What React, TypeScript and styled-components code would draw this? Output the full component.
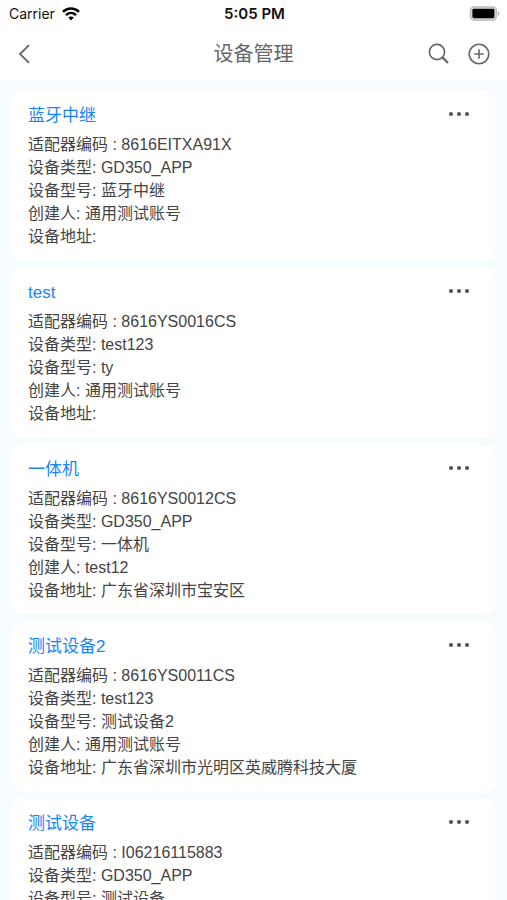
import React from "react";
import styled, { createGlobalStyle } from "styled-components";

const GlobalStyle = createGlobalStyle`
  *, *::before, *::after { box-sizing: border-box; }
  body {
    margin: 0;
    background: #f7fcff;
    color: #444;
    font-family: "Liberation Sans", "Noto Sans CJK SC", sans-serif;
  }
`;

const Screen = styled.div`
  display: flex;
  flex-direction: column;
  height: 100vh;
`;

const StatusBar = styled.div`
  display: grid;
  grid-template-columns: 1fr auto 1fr;
  align-items: center;
  height: 27px;
  padding: 0 7px 0 9px;
  background: #fff;
  color: #111;
  font-family: Inter, sans-serif;
  font-size: 14px;
  line-height: 20px;
`;

const Carrier = styled.span`
  display: flex;
  align-items: center;
  gap: 7px;
`;

const Clock = styled.time`
  font-size: 15px;
  font-weight: 600;
`;

const Battery = styled.svg`
  justify-self: end;
`;

const NavBar = styled.header`
  display: grid;
  grid-template-columns: 1fr auto 1fr;
  align-items: center;
  height: 53px;
  padding: 0 12px;
  background: #fff;
  color: #666;
`;

const PageTitle = styled.h1`
  margin: 0;
  font-size: 20px;
  font-weight: 400;
  line-height: 28px;
`;

const Actions = styled.div`
  display: flex;
  justify-content: flex-end;
  gap: 8px;
`;

const IconButton = styled.button`
  display: flex;
  align-items: center;
  justify-content: center;
  width: 32px;
  height: 32px;
  padding: 0;
  border: 0;
  background: none;
  color: inherit;
  cursor: pointer;
`;

const BackButton = styled(IconButton)`
  width: 24px;
`;

const DeviceList = styled.main`
  display: flex;
  flex: 1;
  flex-direction: column;
  gap: 8px;
  min-height: 0;
  padding: 11px 12px;
  overflow-y: auto;
  scrollbar-width: none;
`;

const Card = styled.article`
  flex: none;
  padding: 12px 16px;
  border-radius: 10px;
  background: #fff;
`;

const CardHeader = styled.div`
  display: flex;
  align-items: flex-start;
  justify-content: space-between;
  margin-bottom: 4px;
`;

const DeviceName = styled.h2`
  margin: 0;
  color: #1785f5;
  font-size: 17px;
  font-weight: 400;
  line-height: 26px;
`;

const MoreButton = styled(IconButton)`
  width: 40px;
  height: 22px;
`;

const Field = styled.p`
  margin: 0;
  font-size: 16px;
  line-height: 23px;
`;

interface Device {
  name: string;
  code: string;
  type: string;
  model: string;
  creator: string;
  address: string;
}

const devices: Device[] = [
  { name: "蓝牙中继", code: "8616EITXA91X", type: "GD350_APP", model: "蓝牙中继", creator: "通用测试账号", address: "" },
  { name: "test", code: "8616YS0016CS", type: "test123", model: "ty", creator: "通用测试账号", address: "" },
  { name: "一体机", code: "8616YS0012CS", type: "GD350_APP", model: "一体机", creator: "test12", address: "广东省深圳市宝安区" },
  { name: "测试设备2", code: "8616YS0011CS", type: "test123", model: "测试设备2", creator: "通用测试账号", address: "广东省深圳市光明区英威腾科技大厦" },
  { name: "测试设备", code: "I06216115883", type: "GD350_APP", model: "测试设备", creator: "通用测试账号", address: "" },
];

const WifiIcon = () => (
  <svg width="18" height="14" viewBox="0 0 18 14" fill="none" stroke="#000" strokeWidth="2.5" aria-hidden="true">
    <path d="M1 4.9C5.5.4 12.5.4 17 4.9" />
    <path d="M4 8.1c2.9-2.8 7.1-2.8 10 0" />
    <path d="M6.3 10.6c1.6-1.5 3.8-1.5 5.4 0L9 13.4Z" fill="#000" stroke="none" />
  </svg>
);

const BatteryIcon = () => (
  <Battery width="31" height="15" viewBox="0 0 31 15" role="img" aria-label="Battery full">
    <rect x="1.4" y="1" width="26" height="13" rx="3.8" fill="#ddd" stroke="#bbb" strokeWidth="1.4" />
    <rect x="3.4" y="2.8" width="22" height="9.4" rx="1.4" fill="#000" />
    <path d="M29 5.2c1.8.6 1.8 4 0 4.6Z" fill="#aaa" />
  </Battery>
);

function DeviceCard({ device }: { device: Device }) {
  return (
    <Card>
      <CardHeader>
        <DeviceName>{device.name}</DeviceName>
        <MoreButton type="button" aria-label={`更多 ${device.name}`}>
          <svg width="22" height="6" viewBox="0 0 22 6" fill="#555" aria-hidden="true">
            <circle cx="3" cy="3" r="2.1" />
            <circle cx="11" cy="3" r="2.1" />
            <circle cx="19" cy="3" r="2.1" />
          </svg>
        </MoreButton>
      </CardHeader>
      <Field>适配器编码 : {device.code}</Field>
      <Field>设备类型: {device.type}</Field>
      <Field>设备型号: {device.model}</Field>
      <Field>创建人: {device.creator}</Field>
      <Field>设备地址: {device.address}</Field>
    </Card>
  );
}

export default function App() {
  return (
    <>
      <GlobalStyle />
      <Screen>
        <StatusBar>
          <Carrier>
            Carrier
            <WifiIcon />
          </Carrier>
          <Clock>5:05 PM</Clock>
          <BatteryIcon />
        </StatusBar>
        <NavBar>
          <BackButton type="button" aria-label="返回">
            <svg width="14" height="20" viewBox="0 0 14 20" fill="none" stroke="currentColor" strokeWidth="1.8" aria-hidden="true">
              <path d="M12 1.2 3 10l9 8.8" />
            </svg>
          </BackButton>
          <PageTitle>设备管理</PageTitle>
          <Actions>
            <IconButton type="button" aria-label="搜索">
              <svg width="22" height="22" viewBox="0 0 22 22" fill="none" stroke="currentColor" aria-hidden="true">
                <circle cx="9" cy="9" r="7.6" strokeWidth="1.6" />
                <path d="m14.4 14.4 5.6 5.6" strokeWidth="2.2" />
              </svg>
            </IconButton>
            <IconButton type="button" aria-label="添加">
              <svg width="22" height="22" viewBox="0 0 22 22" fill="none" stroke="currentColor" strokeWidth="1.6" aria-hidden="true">
                <circle cx="11" cy="11" r="9.8" />
                <path d="M11 6.3v9.4M6.3 11h9.4" />
              </svg>
            </IconButton>
          </Actions>
        </NavBar>
        <DeviceList>
          {devices.map((device) => (
            <DeviceCard key={device.code} device={device} />
          ))}
        </DeviceList>
      </Screen>
    </>
  );
}
